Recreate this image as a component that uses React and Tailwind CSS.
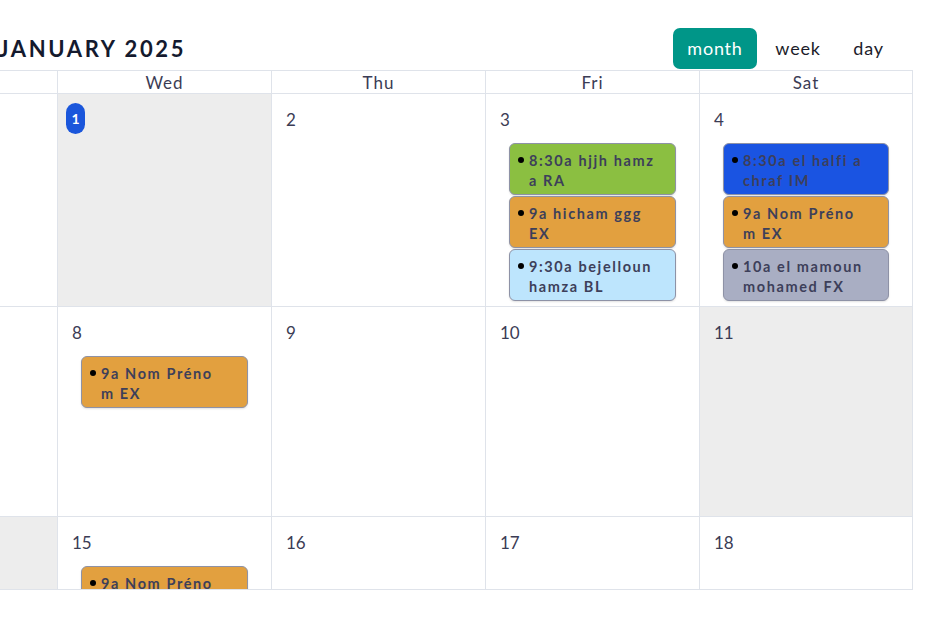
import React from "react";

const font = { fontFamily: "'Lato', 'Noto Sans', sans-serif" };

const colors = {
  green: "bg-[#8bbf41]",
  orange: "bg-[#e2a03f]",
  sky: "bg-[#bde5fd]",
  blue: "bg-[#1a54e2]",
  slate: "bg-[#a9aec3]",
};

function Event({ color, lines }) {
  return (
    <div
      className={`relative h-[52px] mb-[1px] rounded-[6px] border border-[#8e92a6] shadow-[0_1px_2px_rgba(0,0,0,0.12)] pl-[19px] pt-[7px] ${colors[color]}`}
    >
      <span className="absolute left-[8px] top-[13px] w-[6px] h-[6px] rounded-full bg-black" />
      {lines.map((l, i) => (
        <div
          key={i}
          className="text-[14.5px] leading-[20px] font-bold tracking-[1.6px] text-[#3d3f5a] whitespace-nowrap"
        >
          {l}
        </div>
      ))}
    </div>
  );
}

function Cell({ day, gray, today, events = [], first, h }) {
  return (
    <div
      className={`${first ? "" : "border-l"} border-[#dfe3ea] ${gray ? "bg-[#ededed]" : "bg-white"} ${h} overflow-hidden`}
    >
      {today ? (
        <div className="ml-[8px] mt-[9px] w-[19px] h-[31px] rounded-full bg-[#1a56db] flex items-center justify-center text-white text-[14px] font-bold">
          {day}
        </div>
      ) : day ? (
        <div className="pl-[14px] pt-[16px] text-[17px] leading-[20px] text-[#3b3c55]">{day}</div>
      ) : null}
      {events.length > 0 && (
        <div className="mx-[23px] mt-[13px]">
          {events.map((e, i) => (
            <Event key={i} {...e} />
          ))}
        </div>
      )}
    </div>
  );
}

const rows = [
  {
    h: "h-[212px]",
    cells: [
      {},
      { day: "1", today: true, gray: true },
      { day: "2" },
      {
        day: "3",
        events: [
          { color: "green", lines: ["8:30a hjjh hamz", "a RA"] },
          { color: "orange", lines: ["9a hicham ggg", "EX"] },
          { color: "sky", lines: ["9:30a bejelloun", "hamza BL"] },
        ],
      },
      {
        day: "4",
        events: [
          { color: "blue", lines: ["8:30a el halfi a", "chraf IM"] },
          { color: "orange", lines: ["9a Nom Préno", "m EX"] },
          { color: "slate", lines: ["10a el mamoun", "mohamed FX"] },
        ],
      },
    ],
  },
  {
    h: "h-[209px]",
    cells: [
      {},
      { day: "8", events: [{ color: "orange", lines: ["9a Nom Préno", "m EX"] }] },
      { day: "9" },
      { day: "10" },
      { day: "11", gray: true },
    ],
  },
  {
    h: "h-[72px]",
    cells: [
      { gray: true },
      { day: "15", events: [{ color: "orange", lines: ["9a Nom Préno", "m EX"] }] },
      { day: "16" },
      { day: "17" },
      { day: "18" },
    ],
  },
];

export default function App() {
  return (
    <div className="w-[925px] h-[621px] bg-white overflow-hidden" style={font}>
      <div className="w-[913px] pt-[28px]">
        {/* toolbar */}
        <div className="flex items-center justify-between pr-[15px] h-[41px] mb-[1px]">
          <h1 className="text-[22px] font-bold tracking-[2.6px] text-[#141a2e] -ml-[1px]">JANUARY 2025</h1>
          <div className="flex gap-[5px] text-[18px] tracking-[0.8px] text-[#1c1c2a]">
            <button className="h-[41px] w-[84px] rounded-[7px] bg-[#009688] text-white">month</button>
            <button className="h-[41px] w-[72px]">week</button>
            <button className="h-[41px] w-[59px]">day</button>
          </div>
        </div>

        {/* grid */}
        <div className="border-t border-r border-b border-[#dfe3ea]">
          <div className="grid grid-cols-[57px_214px_214px_214px_213px] h-[23px] border-b border-[#dfe3ea]">
            {["", "Wed", "Thu", "Fri", "Sat"].map((d, i) => (
              <div
                key={i}
                className={`${i ? "border-l" : ""} border-[#dfe3ea] text-center text-[17px] leading-[23px] tracking-[1px] text-[#3b3c55]`}
              >
                {d}
              </div>
            ))}
          </div>
          {rows.map((r, ri) => (
            <div
              key={ri}
              className={`grid grid-cols-[57px_214px_214px_214px_213px] ${ri < rows.length - 1 ? "border-b border-[#dfe3ea]" : ""}`}
            >
              {r.cells.map((c, ci) => (
                <Cell key={ci} first={ci === 0} h={r.h} {...c} />
              ))}
            </div>
          ))}
        </div>
      </div>
    </div>
  );
}
